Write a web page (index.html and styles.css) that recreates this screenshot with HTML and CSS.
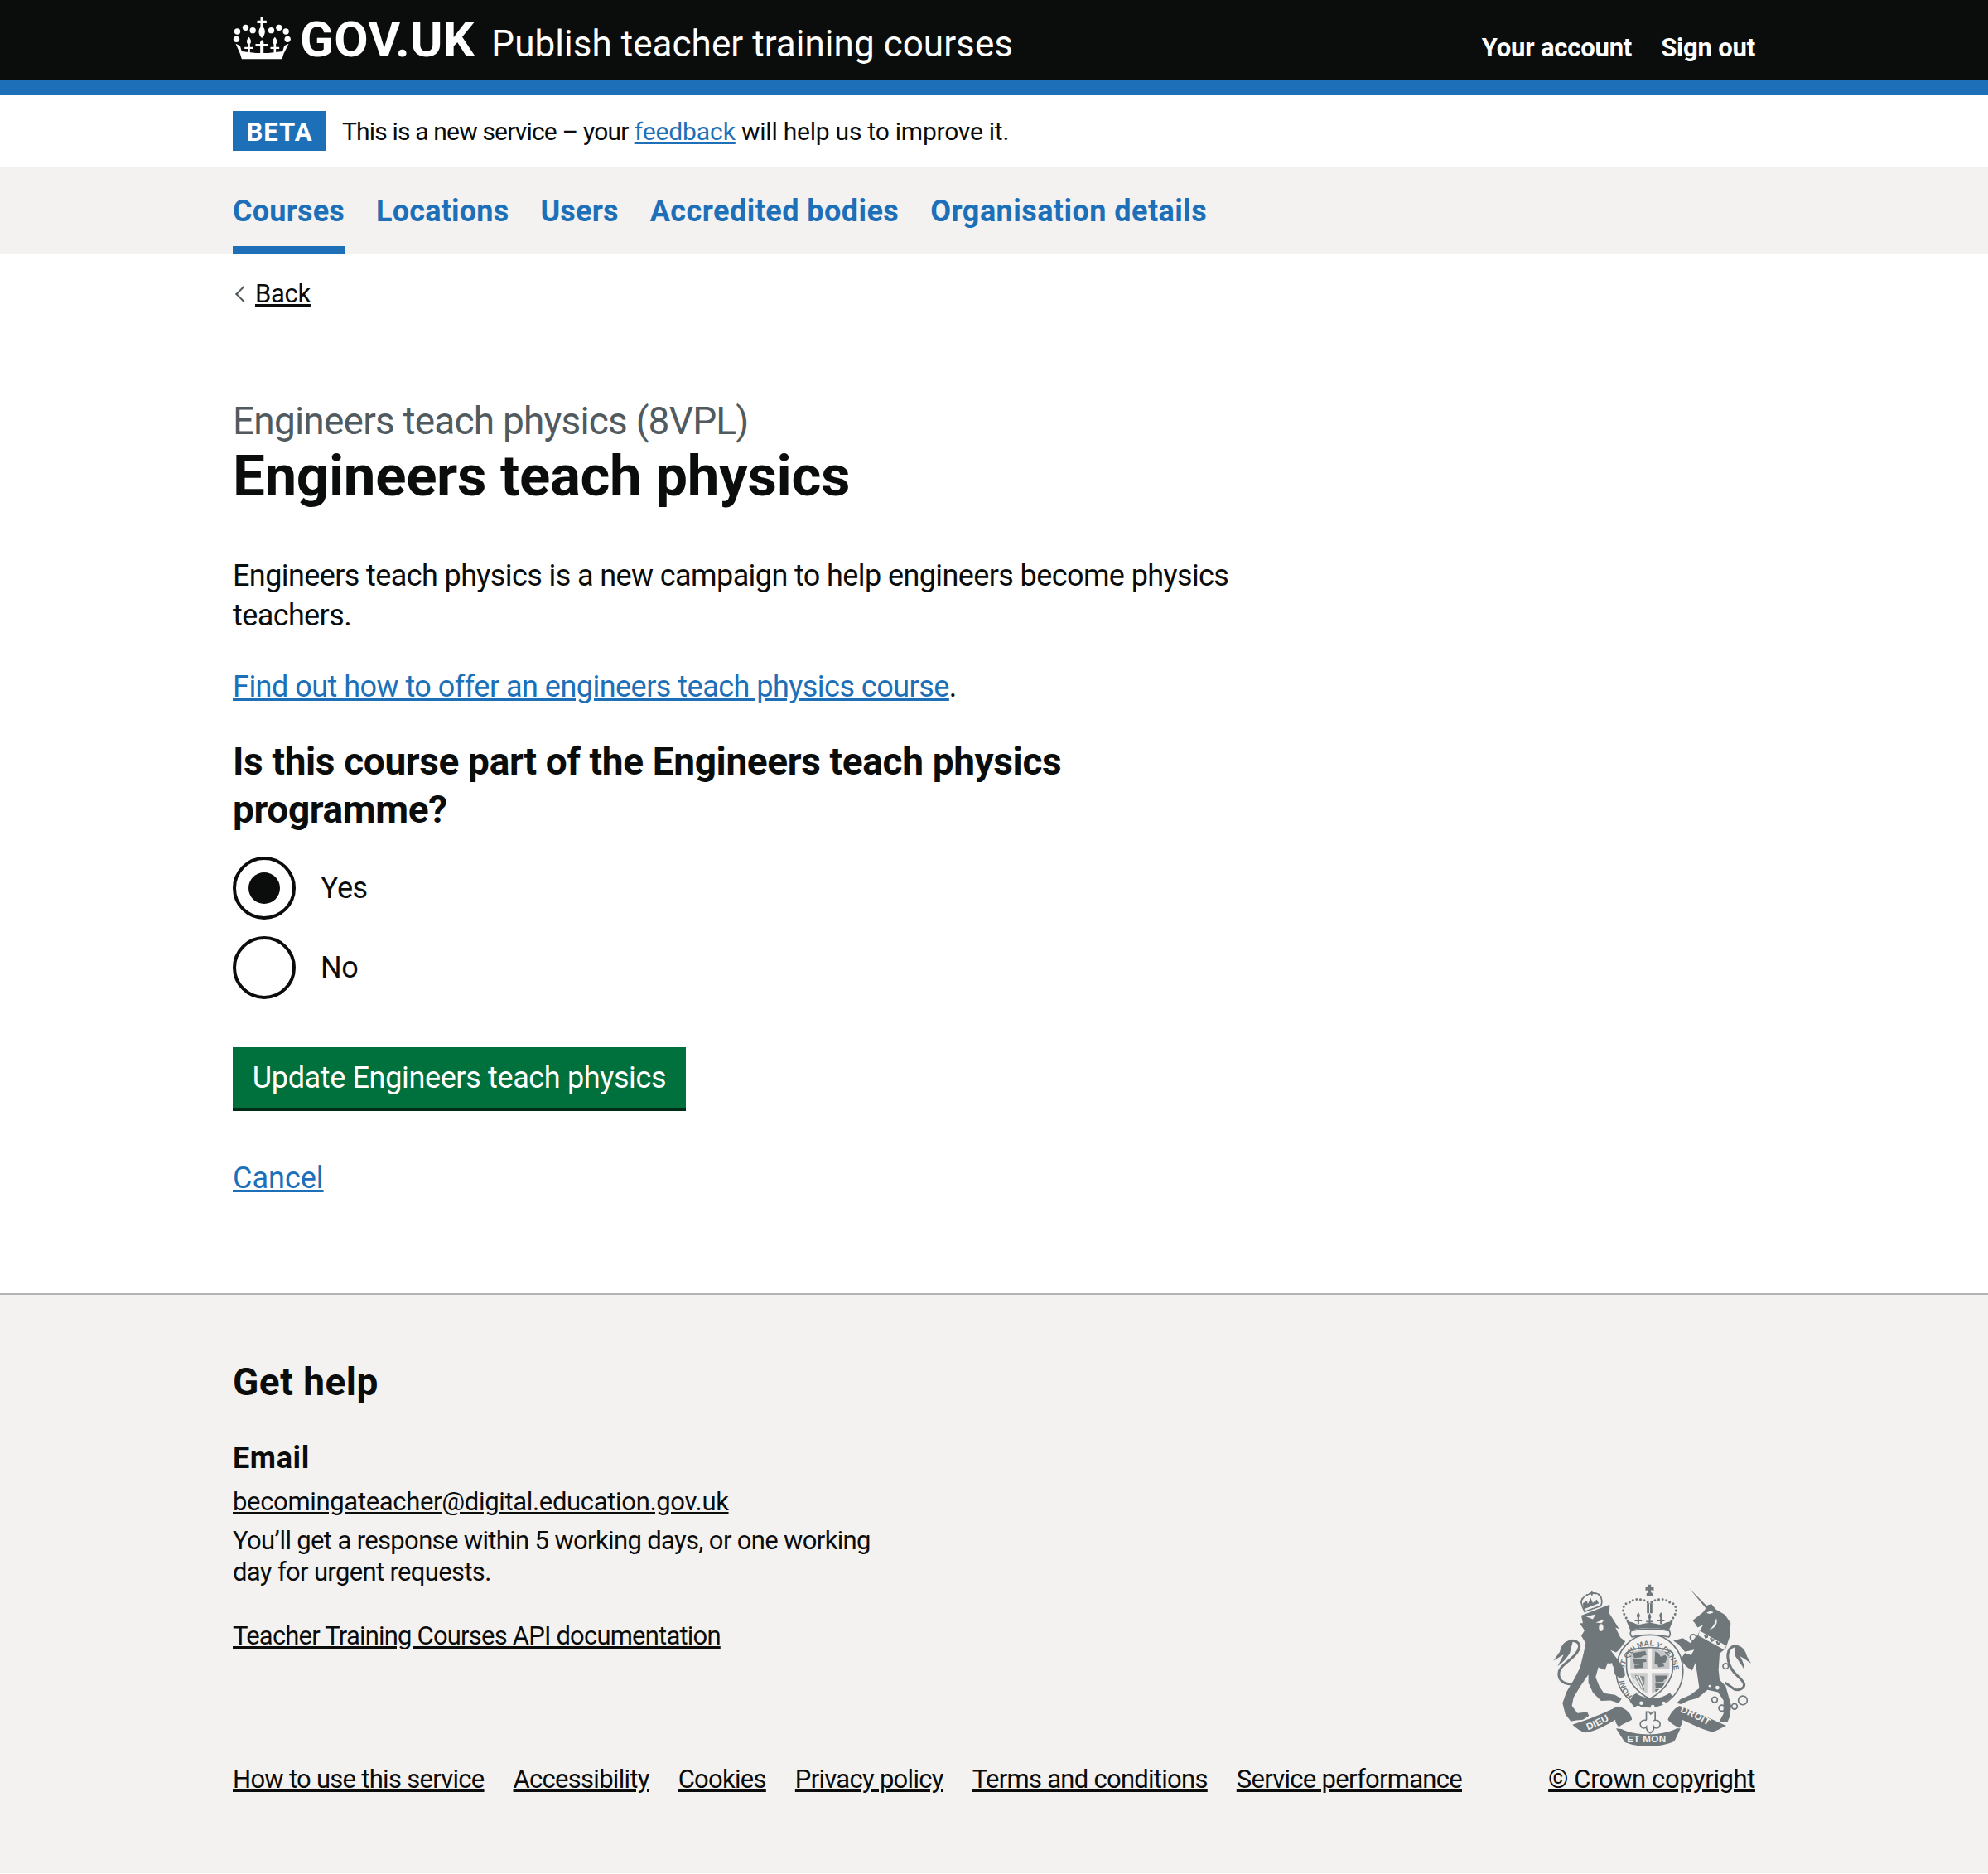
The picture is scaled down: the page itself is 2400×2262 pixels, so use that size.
FILE: index.html
```html
<!DOCTYPE html>
<html lang="en">
<head>
  <meta charset="UTF-8">
  <title>Engineers teach physics</title>
  <link rel="stylesheet" href="styles.css">
</head>
<body>
  <header class="site-header">
    <div class="container header-inner">
      <a class="logo" href="#">
        <svg class="crown" viewBox="60 28 212 156" aria-hidden="true">
          <defs>
            <path id="fleur" d="M0-30C9-20 9-12 4-4V6H16V13H4V32H-4V13H-16V6H-4V-4C-9-12-9-20 0-30Z"/>
          </defs>
          <g fill="#fff">
            <path d="M160 30h10v12h12v10h-12v14c10 12 7 28-5 40-12-12-15-28-5-40V52h-12V42h12z"/>
            <circle cx="106" cy="68" r="11"/><circle cx="132" cy="78" r="11"/>
            <circle cx="199" cy="78" r="11"/><circle cx="227" cy="68" r="11"/>
            <circle cx="76" cy="82" r="11"/><circle cx="252" cy="82" r="11"/>
            <circle cx="73" cy="110" r="11"/><circle cx="258" cy="110" r="11"/>
            <use href="#fleur" x="118" y="132"/>
            <use href="#fleur" x="212" y="132"/>
            <path d="M165 112c6 6 8 11 6 15h17v9h-17v24h-12v-24h-17v-9h17c-2-4 0-9 6-15z"/>
            <path d="M70 126l16 8 6 20 52 6 44 0 52-6 6-20 16-8-18 36-6 20H92l-6-20z"/>
          </g>
        </svg>
        <span class="logo-text">GOV.UK</span>
      </a>
      <a class="service-name" href="#">Publish teacher training courses</a>
      <nav class="account-nav">
        <a href="#">Your account</a>
        <a href="#">Sign out</a>
      </nav>
    </div>
  </header>
  <div class="header-rule"></div>

  <div class="container phase-banner">
    <strong class="phase-tag">BETA</strong>
    <span class="phase-text"><span class="phase-lead">This is a new service – your</span> <a class="link" href="#">feedback</a> will help us to improve it.</span>
  </div>

  <nav class="primary-nav">
    <ul class="container primary-list">
      <li><a class="current" href="#">Courses</a></li>
      <li><a href="#">Locations</a></li>
      <li><a href="#">Users</a></li>
      <li><a class="wide" href="#">Accredited bodies</a></li>
      <li><a class="wide" href="#">Organisation details</a></li>
    </ul>
  </nav>

  <div class="container">
    <a class="back-link" href="#">Back</a>
    <main class="main">
      <span class="caption">Engineers teach physics (8VPL)</span>
      <h1>Engineers teach physics</h1>
      <div class="column">
        <p class="intro">Engineers teach physics is a new campaign to help engineers become physics teachers.</p>
        <p class="find-out"><a class="link" href="#">Find out how to offer an engineers teach physics course</a>.</p>
        <form>
          <fieldset>
            <legend>Is this course part of the Engineers teach physics programme?</legend>
            <div class="radios">
              <label class="radio"><span class="radio-mark checked"></span>Yes</label>
              <label class="radio"><span class="radio-mark"></span>No</label>
            </div>
          </fieldset>
          <button class="button" type="button">Update Engineers teach physics</button>
        </form>
        <a class="link cancel" href="#">Cancel</a>
      </div>
    </main>
  </div>

  <footer class="footer">
    <div class="container">
      <h2>Get help</h2>
      <h3>Email</h3>
      <div class="help">
        <p class="help-email"><a href="#">becomingateacher@digital.education.gov.uk</a></p>
        <p class="response">You’ll get a response within 5 working days, or one working day for urgent requests.</p>
        <p class="api"><a href="#">Teacher Training Courses API documentation</a></p>
      </div>
      <div class="footer-meta">
        <ul class="meta-links">
          <li><a href="#">How to use this service</a></li>
          <li><a href="#">Accessibility</a></li>
          <li><a href="#">Cookies</a></li>
          <li><a href="#">Privacy policy</a></li>
          <li><a href="#">Terms and conditions</a></li>
          <li><a href="#">Service performance</a></li>
        </ul>
        <div class="copyright">
          <svg class="arms" viewBox="400 98 722 592" aria-hidden="true">
            <defs>
              <path id="garter-line" d="M690 505A92 104 0 1 1 822 490"/>
              <path id="dieu-line" d="M528 628C565 615 600 595 640 572"/>
              <path id="droit-line" d="M862 562C900 575 945 600 980 622"/>
              <path id="lys" d="M0-22C7-14 7-8 3-2V6H13V11H3V22H-3V11H-13V6H-3V-2C-7-8-7-14 0-22Z"/>
            </defs>

            <!-- garter and shield -->
            <ellipse class="arms-line" cx="752" cy="412" rx="121" ry="132"/>
            <path class="arms-line" d="M668 348C700 322 804 322 836 348V400C836 450 792 495 752 514C712 495 668 450 668 400Z"/>
            <g class="arms-fill">
              <path d="M682 350C695 340 725 334 744 334V406H682Z" fill-opacity=".35"/>
              <path d="M760 334C780 334 810 340 824 350V406H760Z" fill-opacity=".35"/>
              <path d="M682 420H744V496C712 480 686 450 682 420Z" fill-opacity=".3"/>
              <path d="M760 420H824C820 450 792 480 760 496Z" fill-opacity=".35"/>
              <path d="M692 348l44-7 5 15-14 3-6 5-26 2zM692 370h46l3 10-12 2-5 6-28 0zM696 392l34-3-2 13-30 2z"/>
              <path d="M772 342l12 6 8 14 16-6 8 8-6 18-10 2 6 12-22 4-4-12-10 0zM806 342l12 6-6 6z"/>
              <path d="M772 430h44l-2 12-10 4-2 6-28 2zM772 456h36l-6 10-6 8-22 2zM772 480h16l-14 10z"/>
              <path d="M700 428l34 6-2 50-10-6-22-42z" fill-opacity=".75"/>
            </g>
            <path class="arms-bg-line" d="M704 432l22 46M714 430l18 42M696 444l20 30"/>
            <text class="arms-garter"><textPath href="#garter-line">HONI SOIT QUI MAL Y PENSE</textPath></text>
            <path class="arms-fill" d="M690 502l14-8c30 24 86 26 122-2l8 14c-34 34-84 50-124 32l-14 6-16-20z"/>
            <g class="arms-bg">
              <circle cx="722" cy="530" r="7"/><circle cx="763" cy="543" r="7"/><circle cx="803" cy="530" r="6"/>
            </g>

            <!-- royal crown -->
            <g class="arms-fill">
              <path d="M747 100h10v10l10-2v14l-10-2v8c8 4 8 8 4 14h-18c-4-6-4-10 4-14v-8l-10 2v-14l10 2z"/>
              <path d="M742 168h20v36h-20z"/>
              <use href="#lys" x="711" y="222"/>
              <use href="#lys" x="793" y="222"/>
              <use href="#lys" x="752" y="226"/>
              <path d="M668 232l24 6 18 8 42-8 42 8 18-8 24-6-14 34c-40-12-100-12-140 0z"/>
            </g>
            <path class="arms-bg-line thin" d="M752 170v34"/>
            <path class="arms-dots" d="M745 164C725 150 695 150 680 164 660 165 648 190 662 212 668 222 672 232 676 240"/>
            <path class="arms-dots" d="M759 164C779 150 809 150 824 164 844 165 856 190 842 212 836 222 832 232 828 240"/>
            <path class="arms-line" d="M684 268C720 258 790 258 824 268 828 278 826 286 822 290 780 280 724 280 688 290 684 286 680 278 684 268Z"/>

            <!-- lion -->
            <path class="arms-fill" d="M504 212L607 172 606 205 626 236 642 262 628 256 646 292 664 306 640 338 630 346 610 338 642 380 660 408 663 430 646 441 626 426 620 396 600 384 590 410 566 400 556 436 570 470 586 494 626 500 650 514 640 530 610 520 576 522 546 492 530 456 530 426 500 470 476 510 470 540 490 566 526 562 532 576 510 590 486 592 466 596 446 570 436 530 450 490 480 440 500 400 514 342 520 312 504 286 516 266 498 240 510 240Z"/>
            <path class="arms-line plain" d="M492 462C432 466 418 442 424 414 430 386 490 366 497 326 498 306 470 296 456 310"/>
            <path class="arms-fill" d="M474 304C446 298 432 318 426 344L403 376C418 368 430 358 440 354L418 396C436 384 452 366 462 350Z"/>
            <path class="arms-bg" d="M522 216L556 208 546 226ZM556 238L588 226 578 240Z"/>
            <ellipse class="arms-bg" cx="576" cy="256" rx="8" ry="13"/>
            <path class="arms-bg" d="M600 388l8 22 6-16 6 18-4-28z"/>
            <path class="arms-line" d="M503 162C512 132 566 118 576 148 580 160 578 172 574 178L516 198C510 186 506 174 503 162Z"/>
            <path class="arms-dots small" d="M503 162C512 132 566 118 576 148"/>
            <path class="arms-fill" d="M510 168l14-10 4 12 10-22 8 18 14-12 8 14-56 22zM534 128h6v-6h5v6h6v5h-6v6h-5v-6h-6z"/>

            <!-- unicorn -->
            <path class="arms-fill" d="M896 114L958 176 976 170 992 190 1026 210 1046 240 1042 290 1028 332 1006 350 1002 410 1006 446 1028 468 1048 540 1042 580 1034 600 1004 598 1020 568 1020 520 1000 490 962 482 926 512 894 520 866 534 850 530 864 516 900 500 932 476 924 420 918 384 906 412 884 396 864 372 880 348 902 356 914 336 880 344 856 316 838 304 872 294 900 312 926 282 946 246 926 256 916 240 908 230 946 200 956 186Z"/>
            <path class="arms-bg" d="M958 202C968 196 976 196 984 200 976 206 966 208 958 202ZM994 222C1000 240 992 258 968 264 982 254 990 240 994 222Z"/>
            <path class="arms-collar" d="M934 268L1030 322 1022 336 928 284Z"/>
            <path class="arms-fill" d="M948 282l8-2 0 6 8-2 0 8-10 4zM970 294l8-2 0 6 8-2 0 8-10 4zM992 306l8-2 0 6 8-2 0 8-10 4z"/>
            <path class="arms-line plain" d="M1062 322C1030 330 1030 366 1046 400 1060 430 1090 440 1095 462 1096 476 1076 486 1060 480L1026 456"/>
            <path class="arms-fill" d="M1060 320C1086 318 1100 340 1105 360L1120 386C1106 376 1092 366 1080 360 1090 376 1096 394 1096 410 1086 390 1070 372 1060 356Z"/>
            <g class="arms-bg">
              <circle cx="1018" cy="440" r="8"/><circle cx="998" cy="474" r="7"/><circle cx="970" cy="468" r="4"/>
            </g>
            <g class="arms-rings">
              <circle cx="910" cy="292" r="11"/><circle cx="900" cy="372" r="10"/><circle cx="1028" cy="396" r="10"/>
              <circle cx="988" cy="518" r="10"/><circle cx="1014" cy="548" r="11"/><circle cx="1060" cy="542" r="10"/><circle cx="1090" cy="520" r="16"/>
            </g>

            <!-- motto -->
            <g class="arms-fill">
              <path d="M472 608C530 590 590 565 635 542 660 545 686 565 688 590 670 600 654 606 640 616 630 604 626 596 628 590 590 612 560 630 520 637 500 632 485 620 472 608Z"/>
              <path d="M630 622L650 624C700 650 800 650 850 622L864 622 842 668C790 692 710 692 662 672Z"/>
              <path d="M860 540C900 555 970 585 1030 612 1010 622 995 630 980 635 940 625 900 605 870 590 875 600 866 610 860 620 840 610 825 600 818 590 825 570 840 550 860 540Z"/>
            </g>
            <path class="arms-line" d="M740 562H750L756 570 764 562H772V590L770 592C784 590 794 600 788 614 782 624 772 622 768 616 768 626 764 632 754 638 744 632 740 626 740 616 736 622 726 624 720 614 714 600 724 590 738 592L740 590Z"/>
            <text class="arms-motto"><textPath href="#dieu-line">DIEU</textPath></text>
            <text class="arms-motto" x="670" y="672">ET MON</text>
            <text class="arms-motto"><textPath href="#droit-line">DROIT</textPath></text>
          </svg>
          <a href="#">© Crown copyright</a>
        </div>
      </div>
    </div>
  </footer>
</body>
</html>
```
FILE: styles.css
```css
* {
  box-sizing: border-box;
}

body {
  margin: 0;
  background: #fff;
  color: #0b0c0c;
  font-family: 'Roboto', 'Liberation Sans', sans-serif;
  font-size: 36px;
  line-height: 48px;
  letter-spacing: -0.5px;
}

a {
  color: inherit;
}

p,
h1,
h2,
h3,
ul,
fieldset,
legend {
  margin: 0;
  padding: 0;
  border: 0;
}

ul {
  list-style: none;
}

.container {
  width: 1838px;
  margin: 0 auto;
}

/* header */
.site-header {
  background: #0b0c0c;
  height: 96px;
}

.header-inner {
  display: flex;
  align-items: flex-start;
}

.site-header a {
  color: #fff;
  text-decoration: none;
}

.logo {
  display: flex;
  align-items: center;
  height: 96px;
}

.crown {
  width: 71px;
  height: 52px;
  margin-right: 10px;
  margin-bottom: 4px;
}

.logo-text {
  font-size: 60px;
  font-weight: 700;
  line-height: 96px;
  letter-spacing: 0.3px;
}

.service-name {
  margin-left: 20px;
  font-size: 44px;
  line-height: 107px;
  letter-spacing: 0.05px;
}

.account-nav {
  margin-left: auto;
  display: flex;
  gap: 35px;
  font-size: 31px;
  font-weight: 700;
  line-height: 116px;
  letter-spacing: -0.2px;
}

.header-rule {
  height: 19px;
  background: #1d70b8;
}

/* phase banner */
.phase-banner {
  display: flex;
  align-items: center;
  gap: 19px;
  height: 86px;
  font-size: 30px;
  letter-spacing: -0.23px;
}

.phase-text {
  padding-top: 2px;
}

.phase-lead {
  letter-spacing: -0.83px;
}

.phase-banner .link {
  letter-spacing: -0.1px;
}

.phase-tag {
  background: #1d70b8;
  color: #fff;
  width: 113px;
  height: 48px;
  font-size: 31px;
  text-align: center;
  line-height: 52px;
  letter-spacing: 1px;
}

.link {
  color: #1d70b8;
}

/* primary nav */
.primary-nav {
  background: #f3f2f1;
  height: 105px;
}

.primary-list {
  display: flex;
  gap: 38px;
}

.primary-list a {
  display: block;
  height: 105px;
  color: #1d70b8;
  font-size: 36px;
  font-weight: 700;
  line-height: 108px;
  letter-spacing: 0.2px;
  text-decoration: none;
}

.primary-list a.wide {
  letter-spacing: 0.45px;
}

.primary-list a.current {
  border-bottom: 9px solid #1d70b8;
}

/* main */
.back-link {
  display: inline-block;
  position: relative;
  margin-top: 29px;
  padding-left: 27px;
  font-size: 31px;
  line-height: 40px;
  letter-spacing: -0.3px;
}

.back-link::before {
  content: "";
  position: absolute;
  left: 6px;
  top: 13px;
  width: 12px;
  height: 12px;
  border-left: 2px solid #505a5f;
  border-bottom: 2px solid #505a5f;
  transform: rotate(45deg);
}

.main {
  padding-top: 106px;
}

.caption {
  display: block;
  color: #505a5f;
  font-size: 46px;
  line-height: 50px;
  letter-spacing: -0.8px;
}

h1 {
  font-size: 69px;
  font-weight: 700;
  line-height: 84px;
  letter-spacing: -0.33px;
  margin-bottom: 54px;
}

.column {
  width: 1225px;
}

.intro {
  letter-spacing: -0.6px;
}

.find-out {
  margin-top: 38px;
  letter-spacing: -0.52px;
}

form {
  margin-top: 37px;
}

legend {
  font-size: 46px;
  font-weight: 700;
  line-height: 58px;
  letter-spacing: -0.36px;
  width: 1040px;
}

.radios {
  margin-top: 28px;
  display: flex;
  flex-direction: column;
  gap: 20px;
}

.radio {
  display: flex;
  align-items: center;
  height: 76px;
  gap: 30px;
}

.radio-mark {
  width: 76px;
  height: 76px;
  border: 4px solid #0b0c0c;
  border-radius: 50%;
  display: flex;
  align-items: center;
  justify-content: center;
}

.radio-mark.checked::after {
  content: "";
  width: 38px;
  height: 38px;
  background: #0b0c0c;
  border-radius: 50%;
}

.button {
  display: block;
  margin-top: 58px;
  width: 547px;
  height: 77px;
  padding: 0;
  background: #00703c;
  color: #fff;
  border: 0;
  border-bottom: 4px solid #002d18;
  font: inherit;
  letter-spacing: -0.36px;
  line-height: 70px;
}

.cancel {
  display: inline-block;
  margin-top: 57px;
  margin-bottom: 115px;
  letter-spacing: 0;
}

/* footer */
.footer {
  background: #f3f2f1;
  border-top: 2px solid #b1b4b6;
  height: 700px;
  font-size: 31px;
  line-height: 38px;
  letter-spacing: -0.72px;
}

.footer a {
  color: #0b0c0c;
}

h2 {
  padding-top: 77px;
  font-size: 46px;
  font-weight: 700;
  line-height: 56px;
  letter-spacing: 0.5px;
}

h3 {
  margin-top: 40px;
  font-size: 36px;
  font-weight: 700;
  line-height: 48px;
  letter-spacing: 0.6px;
}

.help {
  width: 790px;
  margin-top: 10px;
}

.help-email {
  letter-spacing: -0.33px;
}

.response {
  margin-top: 9px;
  letter-spacing: -0.65px;
}

.api {
  margin-top: 39px;
  letter-spacing: -0.8px;
}

.footer-meta {
  display: flex;
  justify-content: space-between;
  align-items: flex-end;
  margin-top: -82px;
}

.meta-links {
  display: flex;
  gap: 35px;
}

.copyright {
  display: flex;
  flex-direction: column;
  align-items: center;
  gap: 20px;
  letter-spacing: -0.4px;
}

/* royal arms */
.arms {
  width: 241px;
  height: 197px;
}

.arms-fill {
  fill: #6f777b;
}

.arms-bg {
  fill: #f3f2f1;
}

.arms-line {
  fill: #f3f2f1;
  stroke: #6f777b;
  stroke-width: 5;
}

.arms-line.plain {
  fill: none;
  stroke-width: 9;
}

.arms-bg-line {
  fill: none;
  stroke: #f3f2f1;
  stroke-width: 4;
}

.arms-bg-line.thin {
  stroke-width: 3;
}

.arms-dots {
  fill: none;
  stroke: #6f777b;
  stroke-width: 9;
  stroke-linecap: round;
  stroke-dasharray: 0 14;
}

.arms-dots.small {
  stroke-width: 7;
  stroke-dasharray: 0 11;
}

.arms-collar {
  fill: #f3f2f1;
}

.arms-rings {
  fill: none;
  stroke: #6f777b;
  stroke-width: 5;
}

.arms-garter,
.arms-motto {
  font-family: 'Liberation Sans', sans-serif;
  font-weight: 700;
  letter-spacing: 0;
}

.arms-garter {
  fill: #6f777b;
  font-size: 27px;
}

.arms-motto {
  fill: #f3f2f1;
  font-size: 35px;
  letter-spacing: 1px;
}
```
